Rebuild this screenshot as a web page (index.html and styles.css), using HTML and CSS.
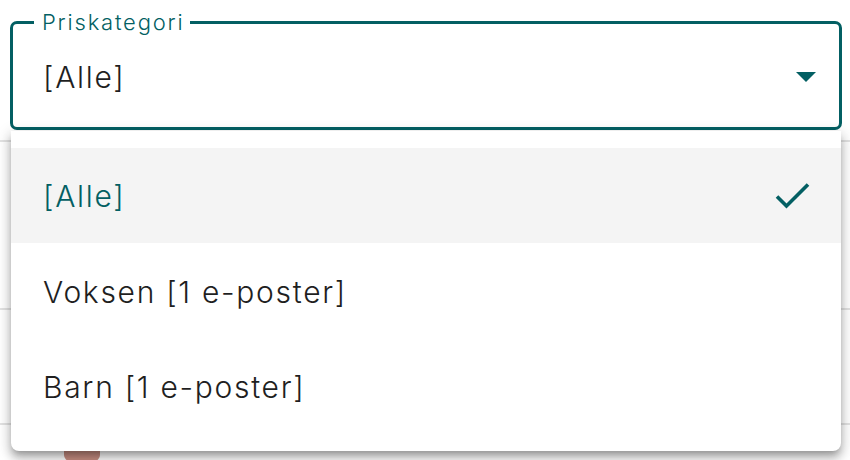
FILE: index.html
```html
<!DOCTYPE html>
<html lang="no">
<head>
    <meta charset="UTF-8">
    <title>Priskategori</title>
    <link rel="stylesheet" href="styles.css">
</head>
<body>
    <!-- tabell bak menyen -->
    <div class="page">
        <div class="row r1"></div>
        <div class="row r2"></div>
        <div class="row r3"></div>
        <div class="row r4"><span class="chip"></span></div>
    </div>

    <!-- velger -->
    <div class="select">
        <div class="field">
            <span class="label">Priskategori</span>
            <span class="value">[Alle]</span>
            <span class="arrow"></span>
        </div>

        <!-- åpen meny -->
        <ul class="menu">
            <li class="item selected">
                <span>[Alle]</span>
                <svg class="check" width="36" height="28" viewBox="0 0 36 28">
                    <polyline points="3,13.5 12.5,23 34,1.5" fill="none" stroke="currentColor" stroke-width="3.6"/>
                </svg>
            </li>
            <li class="item"><span>Voksen [1 e-poster]</span></li>
            <li class="item"><span>Barn [1 e-poster]</span></li>
        </ul>
    </div>
</body>
</html>
```

FILE: styles.css
```css
html,body{
    margin: 0; padding: 0;
}
body{
    width: 850px; height: 460px; overflow: hidden;
    background-color: #fff;
    font-family: Inter, "Noto Sans", sans-serif;
    font-weight: 300;
    color: #1f1f1f;
    position: relative;
}

/* bakgrunn */
.page{
    position: absolute; top: 0; left: 0;
    width: 850px;
}
.row{
    border-bottom: 2px solid #e2e2e2;
}
.r1{ height: 140px; }
.r2{ height: 166px; }
.r3{ height: 113px; }
.r4{ height: 40px; border: none; padding-left: 64px; }
.chip{
    display: inline-block;
    width: 36px; height: 20px; margin-top: 16px;
    background-color: #c98f83; border-radius: 6px;
}

/* velger */
.select{
    position: relative;
    margin: 21px 8px 0 10px;
}
.field{
    height: 109px; box-sizing: border-box;
    border: 3px solid #035f63; border-radius: 7px;
    background-color: #fff;
    display: flex; align-items: center;
    padding: 0 21px 0 30px;
    position: relative;
}
.label{
    position: absolute; top: -16px; left: 21px;
    padding: 0 6px 0 8px;
    background-color: #fff;
    color: #035f63;
    font-size: 22px; line-height: 28px;
    letter-spacing: 1.8px;
}
.value{
    flex: 1;
    font-size: 30px; letter-spacing: 1.7px;
    padding-top: 2px;
}
.arrow{
    width: 0; height: 0;
    border-left: 10px solid transparent;
    border-right: 10px solid transparent;
    border-top: 10px solid #035f63;
    margin-right: 2px; margin-top: 2px;
}

/* meny */
.menu{
    position: absolute; top: 110px; left: 1px; right: 1px;
    margin: 0; padding: 17px 0 18px; list-style: none;
    background-color: #fff;
    border-radius: 0 0 8px 8px;
    box-shadow: 0 5px 6px -3px rgba(0,0,0,.25), 0 8px 10px 1px rgba(0,0,0,.16), 0 3px 14px 2px rgba(0,0,0,.14);
}
.item{
    height: 95px; box-sizing: border-box;
    display: flex; align-items: center; justify-content: space-between;
    padding: 3px 31px 0 32px;
    font-size: 30px; letter-spacing: 1.7px;
}
.selected{
    background-color: #f4f4f4;
    color: #035f63;
    padding-top: 1px;
}
.check{
    color: #035f63;
    margin-top: 2px;
}
```
